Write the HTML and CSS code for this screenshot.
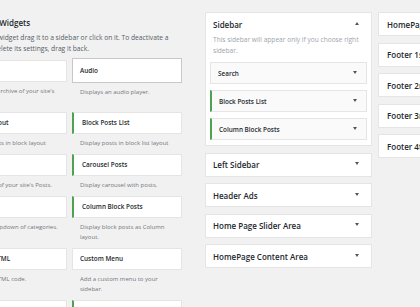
FILE: index.html
```html
<!doctype html>
<html lang="en">
<head>
    <meta charset="utf-8">
    <meta name="viewport" content="width=device-width">
    <title>Widgets</title>
    <link rel="stylesheet" href="styles.css">
</head>
<body>

<div class="screen">

    <section class="available">
        <h2 class="available-title">Available Widgets</h2>
        <p class="available-desc">To activate a widget drag it to a sidebar or click on it. To deactivate a widget and delete its settings, drag it back.</p>

        <div class="widget-list">
            <div class="widget">
                <div class="widget-top">Archives</div>
                <p class="widget-desc">A monthly archive of your site's Posts.</p>
            </div>
            <div class="widget">
                <div class="widget-top widget-top_focus">Audio</div>
                <p class="widget-desc">Displays an audio player.</p>
            </div>

            <div class="widget">
                <div class="widget-top widget-top_new">Block Layout</div>
                <p class="widget-desc">Display posts in block layout</p>
            </div>
            <div class="widget">
                <div class="widget-top widget-top_new">Block Posts List</div>
                <p class="widget-desc">Display posts in block list layout</p>
            </div>

            <div class="widget">
                <div class="widget-top">Calendar</div>
                <p class="widget-desc">A calendar of your site's Posts.</p>
            </div>
            <div class="widget">
                <div class="widget-top widget-top_new">Carousel Posts</div>
                <p class="widget-desc">Display carousel with posts.</p>
            </div>

            <div class="widget">
                <div class="widget-top">Categories</div>
                <p class="widget-desc">A list or dropdown of categories.</p>
            </div>
            <div class="widget">
                <div class="widget-top widget-top_new">Column Block Posts</div>
                <p class="widget-desc">Display block posts as Column layout.</p>
            </div>

            <div class="widget">
                <div class="widget-top">Custom HTML</div>
                <p class="widget-desc">Arbitrary HTML code.</p>
            </div>
            <div class="widget">
                <div class="widget-top">Custom Menu</div>
                <p class="widget-desc">Add a custom menu to your sidebar.</p>
            </div>

            <div class="widget">
                <div class="widget-top">Gallery</div>
                <p class="widget-desc">Displays an image gallery.</p>
            </div>
            <div class="widget">
                <div class="widget-top widget-top_new">Grid Posts</div>
                <p class="widget-desc">Display posts in grid layout.</p>
            </div>
        </div>
    </section>

    <section class="sidebars">
        <div class="sidebar">
            <div class="sidebar-head">
                <h3 class="sidebar-name">Sidebar</h3>
                <span class="toggle toggle_up"></span>
            </div>
            <p class="sidebar-desc">This sidebar will appear only if you choose right sidebar.</p>
            <ul class="sidebar-widgets">
                <li class="sidebar-widget">Search <span class="toggle"></span></li>
                <li class="sidebar-widget sidebar-widget_new">Block Posts List <span class="toggle"></span></li>
                <li class="sidebar-widget sidebar-widget_new">Column Block Posts <span class="toggle"></span></li>
            </ul>
        </div>
        <div class="sidebar sidebar_closed">
            <h3 class="sidebar-name">Left Sidebar</h3>
            <span class="toggle"></span>
        </div>
        <div class="sidebar sidebar_closed">
            <h3 class="sidebar-name">Header Ads</h3>
            <span class="toggle"></span>
        </div>
        <div class="sidebar sidebar_closed">
            <h3 class="sidebar-name">Home Page Slider Area</h3>
            <span class="toggle"></span>
        </div>
        <div class="sidebar sidebar_closed">
            <h3 class="sidebar-name">HomePage Content Area</h3>
            <span class="toggle"></span>
        </div>
    </section>

    <section class="sidebars sidebars_right">
        <div class="sidebar sidebar_closed">
            <h3 class="sidebar-name">HomePage Featured Area</h3>
            <span class="toggle"></span>
        </div>
        <div class="sidebar sidebar_closed">
            <h3 class="sidebar-name">Footer 1st Column</h3>
            <span class="toggle"></span>
        </div>
        <div class="sidebar sidebar_closed">
            <h3 class="sidebar-name">Footer 2nd Column</h3>
            <span class="toggle"></span>
        </div>
        <div class="sidebar sidebar_closed">
            <h3 class="sidebar-name">Footer 3rd Column</h3>
            <span class="toggle"></span>
        </div>
        <div class="sidebar sidebar_closed">
            <h3 class="sidebar-name">Footer 4th Column</h3>
            <span class="toggle"></span>
        </div>
    </section>

</div>

</body>
</html>
```

FILE: styles.css
```css
html, body {
    margin: 0;
    padding: 0;
    background: #f1f1f1;
    color: #23282d;
    font-family: "Open Sans", "Noto Sans", Arial, sans-serif;
    overflow: hidden;
}

.screen {
    display: flex;
    align-items: flex-start;
    padding-top: 12px;
    width: 640px;
}

/* available widgets */
.available {
    flex: none;
    width: 223px;
    margin: 0 23px 0 -41px;
}
    .available-title {
        margin: 5px 0 0 3px;
        font-size: 8px;
        font-weight: 600;
        line-height: 12px;
    }
    .available-desc {
        margin: 3px 0 6px -2px;
        width: 222px;
        font-size: 6.7px;
        line-height: 11px;
        color: #555d66;
    }

.widget-list {
    display: grid;
    grid-template-columns: 108px 110px;
    column-gap: 5px;
    row-gap: 6px;
}
    .widget-top {
        box-sizing: border-box;
        height: 22px;
        padding: 0 7px;
        background: #fff;
        border: 1px solid #e5e5e5;
        font-size: 6.4px;
        font-weight: 600;
        line-height: 20px;
        white-space: nowrap;
    }
        .widget-top_new {
            border-left: 2px solid #4fa24f;
            padding-left: 8px;
        }
        .widget-top_focus {
            height: 25px;
            margin-top: -2px;
            border-color: #c8c8c8;
            line-height: 23px;
        }
    .widget-desc {
        margin: 4px 0 0;
        padding: 0 8px;
        font-size: 6px;
        line-height: 10px;
        color: #72777c;
    }

/* sidebars */
.sidebars {
    flex: none;
    width: 167px;
    display: flex;
    flex-direction: column;
    gap: 6.5px;
}
    .sidebars_right {
        margin-left: 6px;
    }

.sidebar {
    background: #fff;
    border: 1px solid #e5e5e5;
}
    .sidebar_closed {
        box-sizing: border-box;
        height: 24px;
        padding: 0 12px 0 7px;
        display: flex;
        align-items: center;
        justify-content: space-between;
    }
    .sidebars_right .sidebar_closed {
        padding-left: 8px;
    }

.sidebar-head {
    height: 22px;
    padding: 0 12px 0 7px;
    display: flex;
    align-items: center;
    justify-content: space-between;
}
.sidebar-name {
    margin: 0;
    font-size: 8px;
    font-weight: 600;
    white-space: nowrap;
}
.sidebar-desc {
    margin: -1px 0 0;
    padding: 0 7px;
    font-size: 6.6px;
    line-height: 11px;
    color: #a0a5aa;
}

.sidebar-widgets {
    list-style: none;
    margin: 6px 0 0;
    padding: 0 4px 5px;
    display: flex;
    flex-direction: column;
    gap: 6px;
}
    .sidebar-widget {
        box-sizing: border-box;
        height: 22px;
        padding: 0 9px 0 7px;
        background: #fafafa;
        border: 1px solid #e5e5e5;
        display: flex;
        align-items: center;
        justify-content: space-between;
        font-size: 6.4px;
        font-weight: 600;
    }
        .sidebar-widget_new {
            border-left: 2px solid #4fa24f;
        }

/* little triangles */
.toggle {
    width: 0;
    height: 0;
    margin-top: -2px;
    border-left: 2.5px solid transparent;
    border-right: 2.5px solid transparent;
    border-top: 3px solid #555;
}
    .toggle_up {
        border-top: 0;
        border-bottom: 3px solid #555;
    }
```
